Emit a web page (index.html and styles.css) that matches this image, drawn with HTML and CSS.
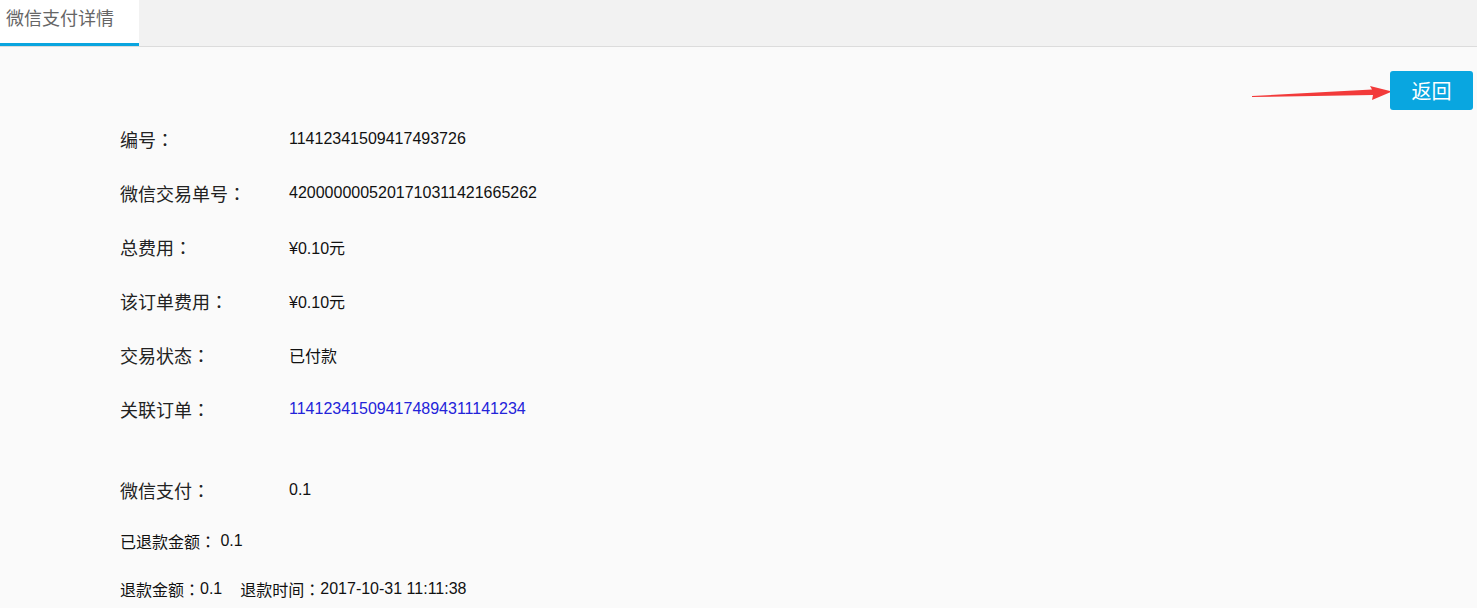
FILE: index.html
```html
<!DOCTYPE html>
<html lang="zh">
<head>
<meta charset="utf-8">
<title>微信支付详情</title>
<link rel="stylesheet" href="styles.css">
</head>
<body>
<div class="tabbar">
  <div class="tab">微信支付详情</div>
</div>
<div class="content">
  <div class="toolbar">
    <svg class="arrow" width="140" height="16" viewBox="0 0 140 16">
      <polygon points="0,10 120,3.5 118,0 140,5.5 120,14 121,9 0,11" fill="#f23a3a"/>
    </svg>
    <button class="back">返回</button>
  </div>
  <div class="rows first">
    <div class="row"><span class="label">编号<span class="colon">：</span></span><span class="value">11412341509417493726</span></div>
    <div class="row"><span class="label">微信交易单号<span class="colon">：</span></span><span class="value">4200000005201710311421665262</span></div>
    <div class="row"><span class="label">总费用<span class="colon">：</span></span><span class="value">¥0.10元</span></div>
    <div class="row"><span class="label">该订单费用<span class="colon">：</span></span><span class="value">¥0.10元</span></div>
    <div class="row"><span class="label">交易状态<span class="colon">：</span></span><span class="value">已付款</span></div>
    <div class="row"><span class="label">关联订单<span class="colon">：</span></span><span class="value link">114123415094174894311141234</span></div>
  </div>
  <div class="rows pay">
    <div class="row"><span class="label">微信支付<span class="colon">：</span></span><span class="value">0.1</span></div>
  </div>
  <div class="small">已退款金额<span class="colon">：</span>&nbsp;0.1</div>
  <div class="small">退款金额<span class="colon">：</span>0.1<span class="gap"></span>退款时间<span class="colon">：</span>2017-10-31 11:11:38</div>
</div>
</body>
</html>
```
FILE: styles.css
```css
* { box-sizing: border-box; }
html, body { margin: 0; padding: 0; }
body {
  background: #fafafa;
  font-family: "Liberation Sans", Arial, "Noto Sans CJK SC", sans-serif;
  color: #222;
  width: 1477px;
  height: 608px;
  overflow: hidden;
}
.tabbar {
  height: 47px;
  background: #f2f2f2;
  border-bottom: 1px solid #dcdcdc;
  display: flex;
}
.tab {
  width: 139px;
  height: 46px;
  background: #fff;
  border-bottom: 3px solid #0aa5df;
  color: #666;
  font-size: 18px;
  padding: 8px 0 0 6px;
  line-height: 22px;
}
.content {
  padding: 24px 4px 0 120px;
}
.toolbar {
  display: flex;
  justify-content: flex-end;
  align-items: center;
  height: 39px;
}
.arrow { margin-right: -2px; margin-top: 7px; }
.back {
  width: 83px;
  height: 39px;
  background: #09a6e0;
  border: none;
  border-radius: 3px;
  color: #fff;
  font-size: 20px;
  font-family: "Noto Sans CJK SC", sans-serif;
  padding: 0;
}
.rows { display: flex; flex-direction: column; }
.row {
  display: flex;
  align-items: center;
  height: 54px;
}
.first { margin-top: 2px; }
.label {
  width: 169px;
  font-size: 18px;
  color: #222;
}
.colon {
  display: inline-block;
  width: 1em;
  text-align: center;
  font-family: "Noto Sans CJK TC", sans-serif;
}
.value { font-size: 16px; color: #111; }
.link { color: #2323d9; }
.pay { margin-top: 27px; }
.small {
  font-size: 16px;
  color: #111;
  height: 48px;
  display: flex;
  align-items: center;
}
.gap { display: inline-block; width: 18px; }
```
